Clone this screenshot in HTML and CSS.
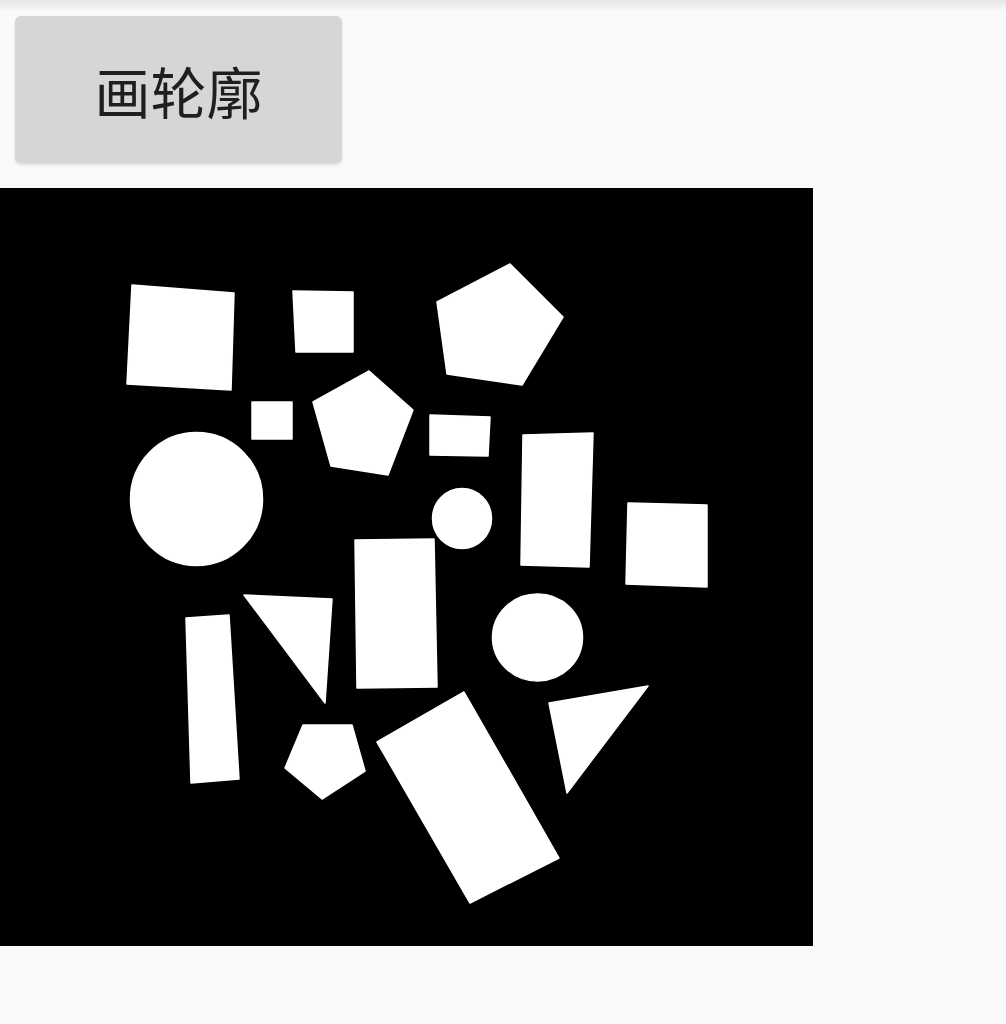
FILE: index.html
```html
<!DOCTYPE html>
<html lang="zh">
<head>
<meta charset="utf-8">
<title>画轮廓</title>
<link rel="stylesheet" href="styles.css">
</head>
<body>
<div class="toolbar">
  <button class="btn" type="button">画轮廓</button>
</div>
<div class="canvas">
  <svg class="shapes" width="813" height="758" viewBox="0 188 813 758" xmlns="http://www.w3.org/2000/svg">
    <rect x="0" y="188" width="813" height="758" fill="#000"/>
    <g fill="#fff" stroke="#fff" stroke-width="1.5" stroke-linejoin="round">
      <polygon points="132,285 234,293 231,390 127,384"/>
      <polygon points="293,291 353,292 353,352 296,352"/>
      <polygon points="252,402 292,402 292,439 252,439"/>
      <polygon points="510,264 563,317 522,385 447,374 437,302"/>
      <polygon points="369,371 413,410 388,475 331,466 313,402"/>
      <polygon points="430,415 490,417 488,456 430,455"/>
      <polygon points="523,435 593,433 589,567 521,565"/>
      <polygon points="628,503 707,505 707,587 626,584"/>
      <ellipse cx="196.5" cy="499" rx="66" ry="66.5"/>
      <ellipse cx="462" cy="518.5" rx="29.5" ry="30"/>
      <ellipse cx="537.5" cy="637.5" rx="45" ry="43.5"/>
      <polygon points="355,540 434,539 437,687 357,688"/>
      <polygon points="244,595 332,599 325,703"/>
      <polygon points="186,618 229,615 239,779 191,783"/>
      <polygon points="303,725 352,725 365,771 322,799 285,768"/>
      <polygon points="464,692 559,858 470,903 377,742"/>
      <polygon points="549,703 648,686 567,793"/>
    </g>
  </svg>
</div>
</body>
</html>
```
FILE: styles.css
```css
html, body {
  margin: 0;
  padding: 0;
}
body {
  width: 1006px;
  height: 1024px;
  background: #fafafa linear-gradient(#e6e6e6, #fafafa 12px) no-repeat;
  font-family: "Noto Sans CJK SC", "Noto Sans", sans-serif;
  overflow: hidden;
}
.toolbar {
  display: flex;
  padding: 16px 0 0 15px;
}
.btn {
  width: 327px;
  height: 147px;
  margin: 0;
  padding: 0;
  border: none;
  border-radius: 6px;
  background: #d6d7d5;
  color: #1f1f1f;
  font-family: "Noto Sans CJK SC", "Noto Sans", sans-serif;
  font-size: 56px;
  font-weight: 400;
  line-height: 1;
  box-shadow: 0 2px 3px rgba(0, 0, 0, 0.12);
  display: flex;
  align-items: center;
  justify-content: center;
}
.canvas {
  margin-top: 25px;
  width: 813px;
  height: 758px;
}
.shapes {
  display: block;
}
```
